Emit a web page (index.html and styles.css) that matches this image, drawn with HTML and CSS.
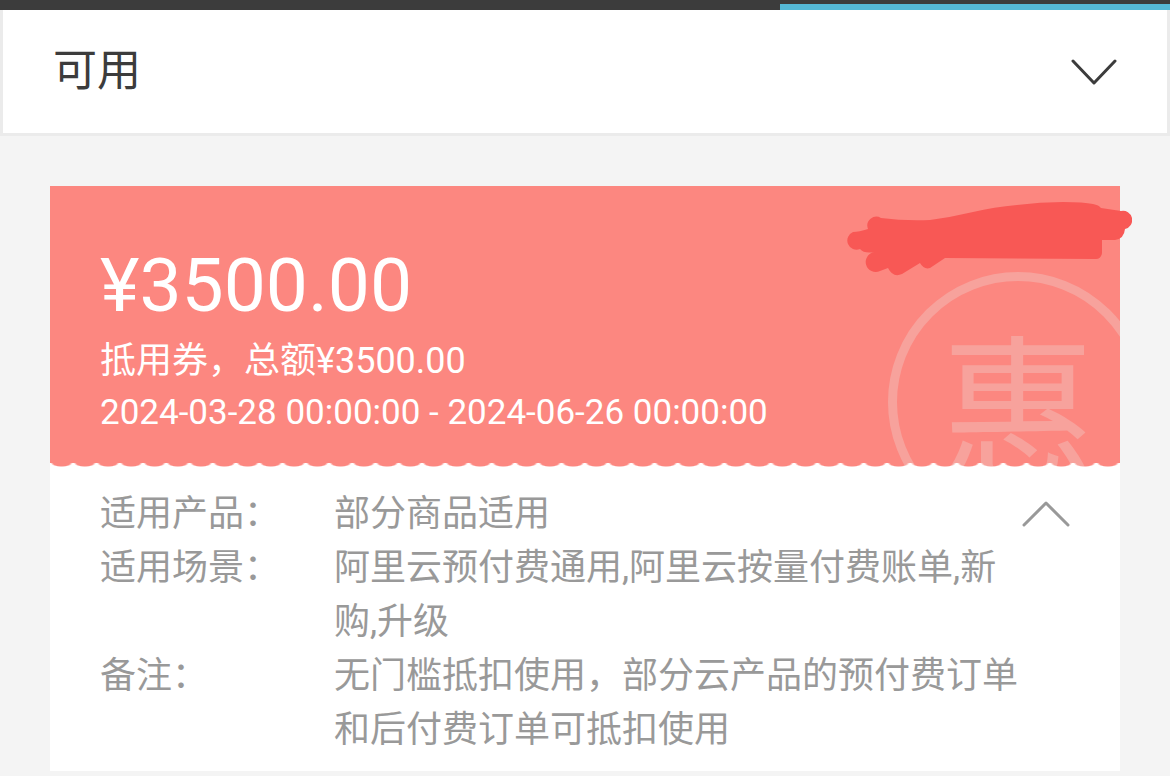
FILE: index.html
```html
<!DOCTYPE html>
<html lang="zh-CN">
<head>
  <meta charset="UTF-8">
  <meta name="viewport" content="width=device-width, initial-scale=1.0">
  <title>代金券</title>
  <link rel="stylesheet" href="styles.css">
</head>
<body>
  <div class="tabs">
    <div class="tab-active"></div>
  </div>

  <div class="filter">
    <select class="filter-select" aria-label="状态">
      <option>可用</option>
    </select>
    <svg class="filter-arrow" width="46" height="26" viewBox="0 0 46 26" aria-hidden="true">
      <path d="M2 2 L23 24 L44 2" />
    </svg>
  </div>

  <main class="list">
    <article class="coupon">
      <div class="coupon-top">
        <div class="seal-box" aria-hidden="true">
          <div class="seal">惠</div>
        </div>
        <div class="amount">¥3500.00</div>
        <div class="info">抵用券，总额¥3500.00</div>
        <div class="info dates">2024-03-28 00:00:00 - 2024-06-26 00:00:00</div>
      </div>

      <!-- 涂抹 -->
      <svg class="scribble" width="288" height="74" viewBox="0 0 288 74" aria-hidden="true">
        <path d="M24 27 A9 9 0 0 1 37 16 Q60 19 86 18 Q108 15 129 10 Q150 5 173 3 Q196 0 219 0 Q240 0 249 2 Q255 3 257 6 L277 9 A9 9 0 0 1 281 27 Q280 37 271 38 L258 38 L258 51 Q257 57 252 57 L101 56 L86 66 Q80 68 76 61 L58 72 Q49 76 44 66 L36 69 A10 10 0 1 1 31 50 Q20 52 16 47 A9 9 0 1 1 9 30 Q15 30 24 27 Z" />
      </svg>

      <div class="coupon-body">
        <dl class="details">
          <dt>适用产品：</dt>
          <dd>部分商品适用</dd>
          <dt>适用场景：</dt>
          <dd>阿里云预付费通用,阿里云按量付费账单,新购,升级</dd>
          <dt>备注：</dt>
          <dd>无门槛抵扣使用，部分云产品的预付费订单和后付费订单可抵扣使用</dd>
        </dl>
        <button class="toggle" type="button" aria-label="收起">
          <svg width="48" height="26" viewBox="0 0 48 26" aria-hidden="true">
            <path d="M2 24 L24 2 L46 24" />
          </svg>
        </button>
      </div>
    </article>
  </main>
</body>
</html>
```
FILE: styles.css
```css
* {
  box-sizing: border-box;
}
body {
  margin: 0;
  background-color: #f4f4f4;
  color: #3c3c3c;
  font-family: Roboto, 'Noto Sans CJK SC', sans-serif;
  font-size: 36px;
}
.tabs {
  display: flex;
  justify-content: flex-end;
  align-items: flex-end;
  height: 10px;
  background-color: #3c3c3c;
}
.tab-active {
  width: calc(100% / 3);
  height: 6px;
  background-color: #55b8d5;
}
.filter {
  display: grid;
  align-items: center;
  background-color: #fff;
  border: 3px solid #ebebeb;
  border-top: none;
}
.filter-select {
  grid-area: 1 / 1;
  width: 100%;
  height: 123px;
  padding: 0 50px 2px;
  appearance: none;
  background: none;
  border: none;
  color: #3c3c3c;
  font-family: inherit;
  font-size: 44px;
}
.filter-arrow {
  grid-area: 1 / 1;
  justify-self: end;
  margin-right: 50px;
  pointer-events: none;
}
svg path {
  fill: none;
  stroke: #3c3c3c;
  stroke-width: 3;
  stroke-linecap: round;
  stroke-linejoin: round;
}
.list {
  padding: 50px 50px 0;
}
.coupon {
  position: relative;
  background-color: #fff;
}
.coupon-top {
  position: relative;
  padding: 49px 50px 28px;
  background-color: #fc8780;
  color: #fff;
}
/* 锯齿边 */
.coupon-top::after {
  content: "";
  position: absolute;
  left: 0;
  right: 0;
  bottom: 0;
  height: 4px;
  background-image: radial-gradient(ellipse 11px 4px at 50% 0, transparent 75%, #fff 100%);
  background-size: calc(100% / 46) 4px;
}
.amount {
  position: relative;
  font-size: 75px;
  line-height: 100px;
}
.info {
  position: relative;
  line-height: 52px;
}
.dates {
  font-size: 35px;
}
.seal-box {
  position: absolute;
  inset: 0;
  overflow: hidden;
}
.seal {
  position: absolute;
  right: -28px;
  top: 86px;
  display: flex;
  align-items: center;
  justify-content: center;
  width: 260px;
  height: 260px;
  padding-bottom: 6px;
  border: 9px solid #f7a29c;
  border-radius: 50%;
  color: #f7a29c;
  font-family: 'Noto Sans CJK SC', sans-serif;
  font-size: 156px;
  line-height: 156px;
}
.scribble {
  position: absolute;
  top: 16px;
  right: -12px;
}
.scribble path {
  fill: #f85855;
  stroke: none;
}
.coupon-body {
  display: flex;
  align-items: flex-start;
  padding: 20px 50px 14px;
}
.details {
  flex: 1;
  display: grid;
  grid-template-columns: 234px 1fr;
  margin: 0;
  color: #999;
  line-height: 54px;
}
.details dd {
  margin: 0;
}
.toggle {
  display: flex;
  align-items: center;
  height: 54px;
  padding: 0;
  background: none;
  border: none;
  cursor: pointer;
}
.toggle path {
  stroke: #999;
}
```
